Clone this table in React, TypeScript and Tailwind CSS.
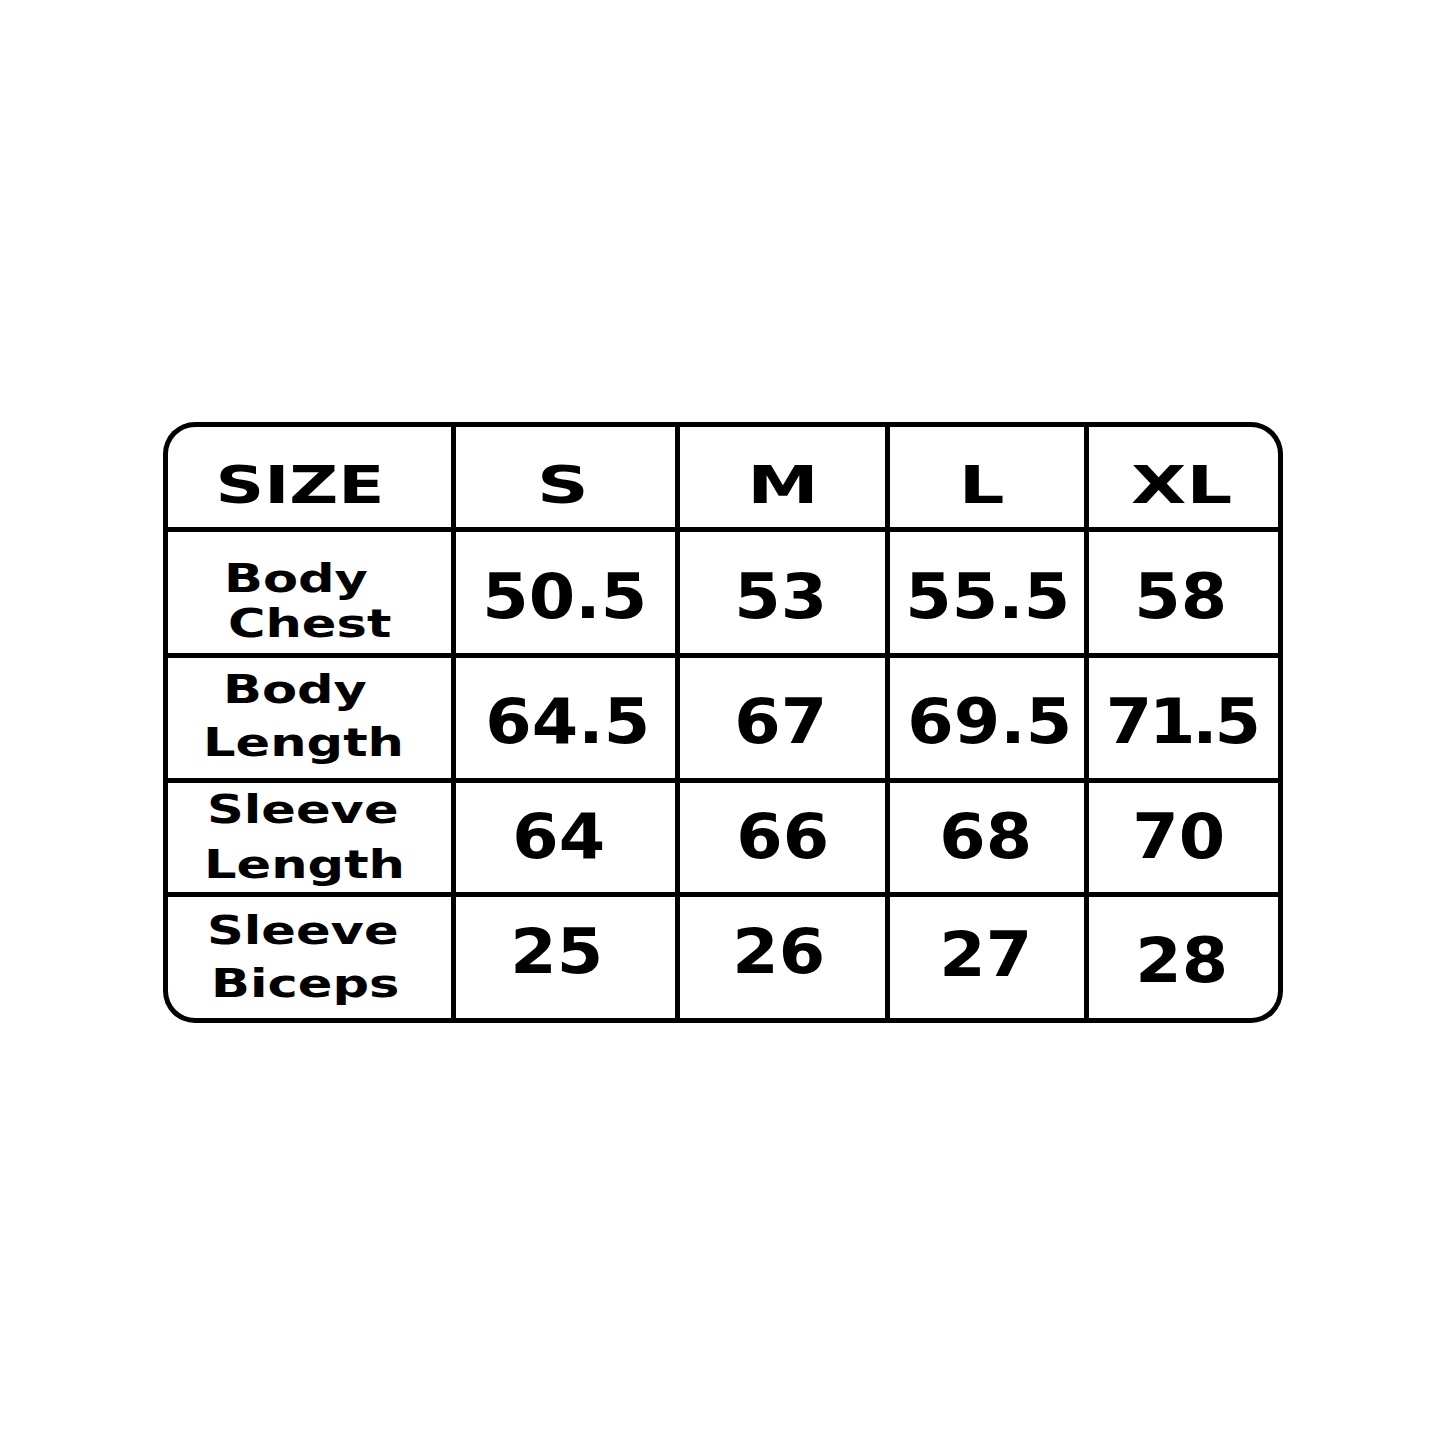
import React from 'react';

type Label = { text: string; pad: string };

type Row = {
    lines: Label[];
    labelClass: string;
    values: { text: string; shift: string }[];
};

const headers = [
    { text: 'S', shift: 'translate-x-[-2px] translate-y-[8px]' },
    { text: 'M', shift: 'translate-x-[1px] translate-y-[8px]' },
    { text: 'L', shift: 'translate-x-[-5px] translate-y-[8px]' },
    { text: 'XL', shift: 'translate-x-[-1px] translate-y-[8px]' },
];

const rows: Row[] = [
    {
        lines: [
            { text: 'Body', pad: 'pl-[56px]' },
            { text: 'Chest', pad: 'pl-[60px]' },
        ],
        labelClass: 'pt-[28px] leading-[38px]',
        values: [
            { text: '50.5', shift: 'translate-y-[4px]' },
            { text: '53', shift: 'translate-x-[-1px] translate-y-[4px]' },
            { text: '55.5', shift: 'translate-x-[1px] translate-y-[4px]' },
            { text: '58', shift: 'translate-x-[-2px] translate-y-[4px]' },
        ],
    },
    {
        lines: [
            { text: 'Body', pad: 'pl-[55px]' },
            { text: 'Length', pad: 'pl-[35px]' },
        ],
        labelClass: 'pt-[9px] leading-[45px]',
        values: [
            { text: '64.5', shift: 'translate-x-[3px] translate-y-[3px]' },
            { text: '67', shift: 'translate-x-[-1px] translate-y-[3px]' },
            { text: '69.5', shift: 'translate-x-[3px] translate-y-[3px]' },
            { text: '71.5', shift: 'translate-x-[-1px] translate-y-[3px] tracking-[-3px]' },
        ],
    },
    {
        lines: [
            { text: 'Sleeve', pad: 'pl-[39px]' },
            { text: 'Length', pad: 'pl-[36px]' },
        ],
        labelClass: 'pt-[3px] leading-[47px]',
        values: [
            { text: '64', shift: 'translate-x-[-6px] translate-y-[-1px]' },
            { text: '66', shift: 'translate-x-[1px] translate-y-[-1px]' },
            { text: '68', shift: 'translate-x-[-1px] translate-y-[-1px]' },
            { text: '70', shift: 'translate-x-[-4px] translate-y-[-1px]' },
        ],
    },
    {
        lines: [
            { text: 'Sleeve', pad: 'pl-[39px]' },
            { text: 'Biceps', pad: 'pl-[43px]' },
        ],
        labelClass: 'pt-[11px] leading-[46px]',
        values: [
            { text: '25', shift: 'translate-x-[-8px] translate-y-[-6px]' },
            { text: '26', shift: 'translate-x-[-3px] translate-y-[-6px]' },
            { text: '27', shift: 'translate-x-[-1px] translate-y-[-3px]' },
            { text: '28', shift: 'translate-x-[-1px] translate-y-[3px]' },
        ],
    },
];

const font = "font-['DejaVu_Sans',sans-serif] font-bold text-black";

const App = () => {
    return (
        <div className="w-full h-[1445px] bg-white flex items-center justify-center">
            <div className="grid w-[1120px] bg-black p-[5px] gap-[5px] rounded-[32px] grid-cols-[283px_219px_205px_194px_189px] grid-rows-[100px_121px_120px_109px_121px]">
                {/* header row */}
                <div className="bg-white rounded-tl-[27px] flex items-center justify-center">
                    <span className={`${font} text-[52px] leading-none scale-x-[1.3] translate-x-[-9px] translate-y-[8px]`}>
                        SIZE
                    </span>
                </div>
                {headers.map((h, i) => (
                    <div
                        key={h.text}
                        className={`bg-white flex items-center justify-center ${i === headers.length - 1 ? 'rounded-tr-[27px]' : ''}`}
                    >
                        <span className={`${font} text-[52px] leading-none scale-x-[1.38] ${h.shift}`}>
                            {h.text}
                        </span>
                    </div>
                ))}

                {rows.map((row, r) => (
                    <React.Fragment key={r}>
                        <div className={`bg-white flex flex-col ${row.labelClass} ${r === rows.length - 1 ? 'rounded-bl-[27px]' : ''}`}>
                            {row.lines.map((line) => (
                                <div key={line.text} className={line.pad}>
                                    <span className={`${font} text-[39px] inline-block whitespace-nowrap origin-left scale-x-[1.31]`}>
                                        {line.text}
                                    </span>
                                </div>
                            ))}
                        </div>
                        {row.values.map((v, i) => (
                            <div
                                key={i}
                                className={`bg-white flex items-center justify-center ${r === rows.length - 1 && i === row.values.length - 1 ? 'rounded-br-[27px]' : ''}`}
                            >
                                <span className={`${font} text-[63px] leading-none whitespace-nowrap scale-x-[1.06] ${v.shift}`}>
                                    {v.text}
                                </span>
                            </div>
                        ))}
                    </React.Fragment>
                ))}
            </div>
        </div>
    );
};

export default App;
